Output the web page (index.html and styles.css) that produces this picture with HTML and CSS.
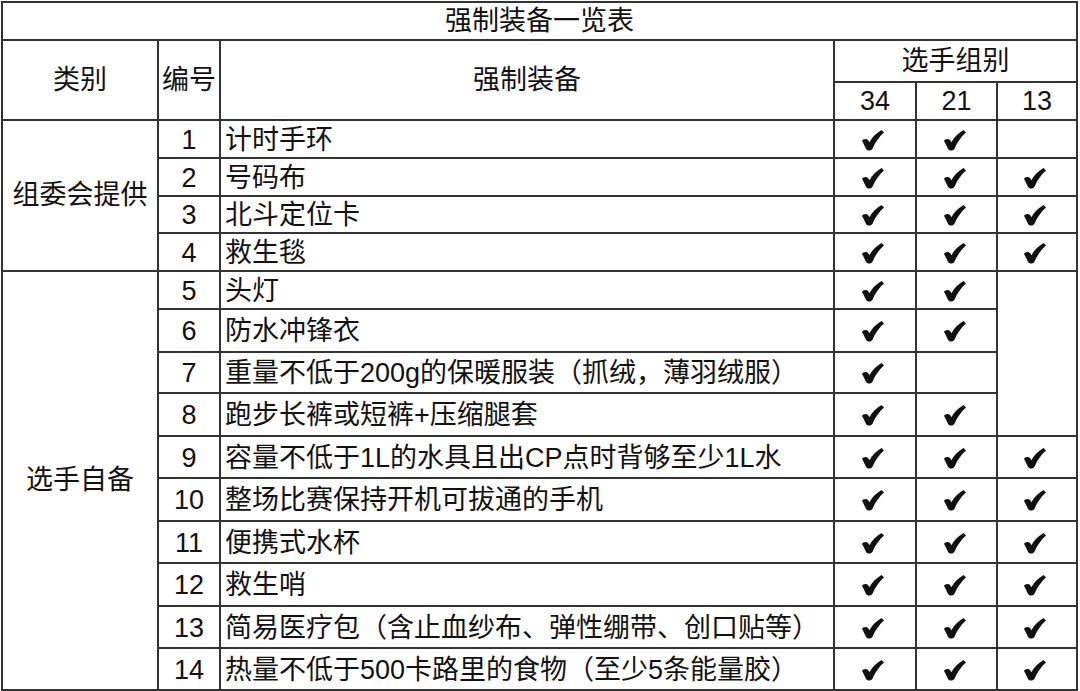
FILE: index.html
```html
<!DOCTYPE html>
<html lang="zh">
<head>
<meta charset="utf-8">
<title>强制装备一览表</title>
<link rel="stylesheet" href="styles.css">
</head>
<body>
<svg class="defs" width="0" height="0" aria-hidden="true">
  <symbol id="ck" viewBox="0 0 22 21">
    <path d="M0 11 C1.2 8.5 5.2 8.3 6.6 10.8 L7.4 12.2 C10.3 7.3 14.3 2.8 19.6 0 L22 2.6 C17.2 6.8 13.4 12.2 10.6 18.4 C9.3 21 5.2 21.4 3.9 18.8 C2.7 16.2 1.7 13.6 0 11 Z"/>
  </symbol>
</svg>
<table class="gear">
  <colgroup>
    <col class="c-cat"><col class="c-no"><col class="c-item"><col class="c-g"><col class="c-g2"><col class="c-g3">
  </colgroup>
  <tr class="h38"><td colspan="6" class="center">强制装备一览表</td></tr>
  <tr class="h42">
    <td rowspan="2" class="center">类别</td>
    <td rowspan="2" class="center">编号</td>
    <td rowspan="2" class="center">强制装备</td>
    <td colspan="3" class="center">选手组别</td>
  </tr>
  <tr class="h38"><td class="center">34</td><td class="center">21</td><td class="center">13</td></tr>

  <tr class="h38">
    <td rowspan="4" class="center">组委会提供</td>
    <td class="center b">1</td><td class="item">计时手环</td>
    <td class="center"><svg class="chk"><use href="#ck"/></svg></td>
    <td class="center"><svg class="chk"><use href="#ck"/></svg></td>
    <td></td>
  </tr>
  <tr class="h38">
    <td class="center b">2</td><td class="item">号码布</td>
    <td class="center"><svg class="chk"><use href="#ck"/></svg></td>
    <td class="center"><svg class="chk"><use href="#ck"/></svg></td>
    <td class="center"><svg class="chk"><use href="#ck"/></svg></td>
  </tr>
  <tr class="h37">
    <td class="center b">3</td><td class="item">北斗定位卡</td>
    <td class="center"><svg class="chk"><use href="#ck"/></svg></td>
    <td class="center"><svg class="chk"><use href="#ck"/></svg></td>
    <td class="center"><svg class="chk"><use href="#ck"/></svg></td>
  </tr>
  <tr class="h38">
    <td class="center b">4</td><td class="item">救生毯</td>
    <td class="center"><svg class="chk"><use href="#ck"/></svg></td>
    <td class="center"><svg class="chk"><use href="#ck"/></svg></td>
    <td class="center"><svg class="chk"><use href="#ck"/></svg></td>
  </tr>

  <tr class="h38">
    <td rowspan="10" class="center">选手自备</td>
    <td class="center b">5</td><td class="item">头灯</td>
    <td class="center"><svg class="chk"><use href="#ck"/></svg></td>
    <td class="center"><svg class="chk"><use href="#ck"/></svg></td>
    <td rowspan="4"></td>
  </tr>
  <tr class="h43">
    <td class="center b">6</td><td class="item">防水冲锋衣</td>
    <td class="center"><svg class="chk"><use href="#ck"/></svg></td>
    <td class="center"><svg class="chk"><use href="#ck"/></svg></td>
  </tr>
  <tr class="h41">
    <td class="center b">7</td><td class="item">重量不低于200g的保暖服装（抓绒，薄羽绒服）</td>
    <td class="center"><svg class="chk"><use href="#ck"/></svg></td>
    <td></td>
  </tr>
  <tr class="h43">
    <td class="center b">8</td><td class="item">跑步长裤或短裤+压缩腿套</td>
    <td class="center"><svg class="chk"><use href="#ck"/></svg></td>
    <td class="center"><svg class="chk"><use href="#ck"/></svg></td>
  </tr>
  <tr class="h42">
    <td class="center b">9</td><td class="item">容量不低于1L的水具且出CP点时背够至少1L水</td>
    <td class="center"><svg class="chk"><use href="#ck"/></svg></td>
    <td class="center"><svg class="chk"><use href="#ck"/></svg></td>
    <td class="center"><svg class="chk"><use href="#ck"/></svg></td>
  </tr>
  <tr class="h43">
    <td class="center b">10</td><td class="item">整场比赛保持开机可拔通的手机</td>
    <td class="center"><svg class="chk"><use href="#ck"/></svg></td>
    <td class="center"><svg class="chk"><use href="#ck"/></svg></td>
    <td class="center"><svg class="chk"><use href="#ck"/></svg></td>
  </tr>
  <tr class="h42">
    <td class="center b">11</td><td class="item">便携式水杯</td>
    <td class="center"><svg class="chk"><use href="#ck"/></svg></td>
    <td class="center"><svg class="chk"><use href="#ck"/></svg></td>
    <td class="center"><svg class="chk"><use href="#ck"/></svg></td>
  </tr>
  <tr class="h43">
    <td class="center b">12</td><td class="item">救生哨</td>
    <td class="center"><svg class="chk"><use href="#ck"/></svg></td>
    <td class="center"><svg class="chk"><use href="#ck"/></svg></td>
    <td class="center"><svg class="chk"><use href="#ck"/></svg></td>
  </tr>
  <tr class="h42">
    <td class="center b">13</td><td class="item">简易医疗包（含止血纱布、弹性绷带、创口贴等）</td>
    <td class="center"><svg class="chk"><use href="#ck"/></svg></td>
    <td class="center"><svg class="chk"><use href="#ck"/></svg></td>
    <td class="center"><svg class="chk"><use href="#ck"/></svg></td>
  </tr>
  <tr class="h42">
    <td class="center b">14</td><td class="item">热量不低于500卡路里的食物（至少5条能量胶）</td>
    <td class="center"><svg class="chk"><use href="#ck"/></svg></td>
    <td class="center"><svg class="chk"><use href="#ck"/></svg></td>
    <td class="center"><svg class="chk"><use href="#ck"/></svg></td>
  </tr>
</table>
</body>
</html>
```

FILE: styles.css
```css
html, body {
  margin: 0;
  padding: 0;
  background: #ffffff;
}

body {
  padding: 1px 0 0 1px;
  font-family: "Liberation Sans", "Noto Sans CJK SC", sans-serif;
  font-size: 27px;
  color: #111111;
}

.defs {
  position: absolute;
  width: 0;
  height: 0;
  overflow: hidden;
}

.gear {
  border-collapse: collapse;
  table-layout: fixed;
  width: 1077px;
}

.gear td {
  border: 2px solid #333333;
  padding: 0;
  line-height: 1;
  vertical-align: middle;
  white-space: nowrap;
  overflow: hidden;
}

.c-cat { width: 156px; }
.c-no { width: 62px; }
.c-item { width: 614px; }
.c-g { width: 82px; }
.c-g2 { width: 81px; }
.c-g3 { width: 80px; }

.center { text-align: center; }
.b { padding-top: 2px !important; }
.item { text-align: left; padding-left: 4px !important; padding-top: 2px !important; }

.h37 { height: 37px; }
.h38 { height: 38px; }
.h41 { height: 41px; }
.h42 { height: 42px; }
.h43 { height: 43px; }

.chk {
  width: 22px;
  height: 21px;
  fill: #111111;
  display: inline-block;
  vertical-align: middle;
  margin-right: 4px;
}
```
